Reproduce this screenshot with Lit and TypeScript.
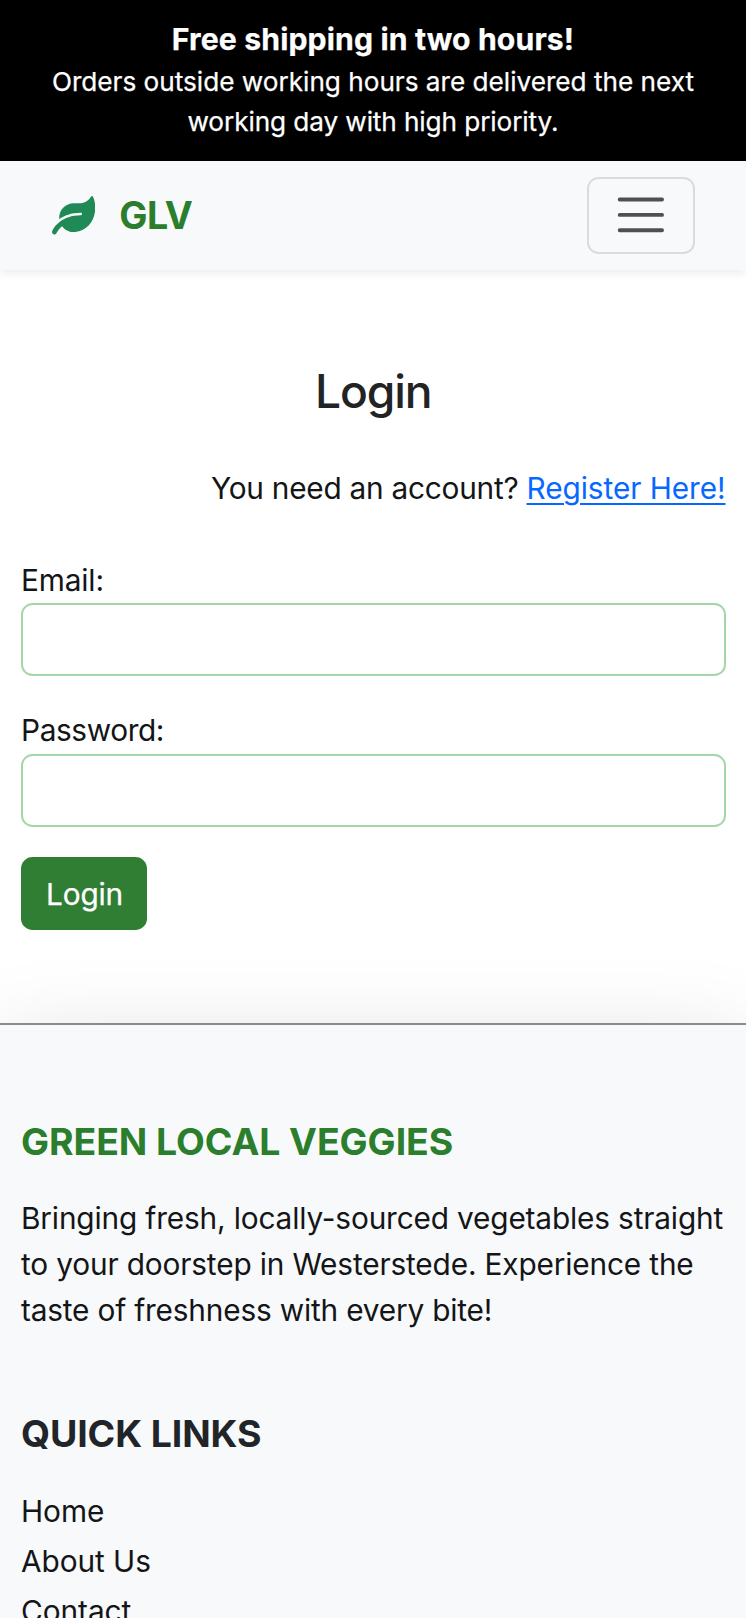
import { LitElement, html, css } from "lit";

class AppRoot extends LitElement {
  static styles = css`
    :host {
      display: block;
      height: 1618px;
      overflow: hidden;
      background: #fff;
      color: #141517;
      font-family: Inter, "Liberation Sans", sans-serif;
      font-size: 29.8px;
      line-height: 46.2px;
    }
    * { box-sizing: border-box; }
    h2, h3, p, ul { margin: 0; padding: 0; font-weight: 400; }
    a { color: inherit; text-decoration: none; }
    .line { display: block; white-space: nowrap; }

    .banner {
      height: 161px;
      padding-top: 17.4px;
      background: #000;
      color: #fff;
      text-align: center;
      font-size: 26.2px;
      line-height: 40.4px;
      -webkit-text-stroke: 0.25px #fff;
    }
    .banner-title {
      font-size: 30.2px;
      font-weight: 700;
      line-height: 44.6px;
      letter-spacing: 0.12px;
    }
    .banner-one { letter-spacing: -0.015px; }
    .banner-two { letter-spacing: -0.1px; }

    .navbar {
      display: flex;
      align-items: center;
      justify-content: space-between;
      height: 108.6px;
      padding: 0 51px 0 52px;
      background: #f8f9fb;
      box-shadow: 0 4px 8px rgba(0, 0, 0, 0.065);
    }
    .brand {
      display: flex;
      align-items: center;
      gap: 24px;
      color: #2a7e2c;
      font-size: 37.6px;
      font-weight: 700;
      letter-spacing: -0.5px;
    }
    .brand-name { padding-top: 2px; }
    .leaf { display: block; width: 43.3px; height: 38.5px; fill: #1f8a55; }
    .toggler {
      display: grid;
      place-items: center;
      width: 107.8px;
      height: 77px;
      padding: 0;
      border: 2px solid #d9dbdc;
      border-radius: 11.6px;
      background: transparent;
    }
    .bars { display: block; width: 57.75px; height: 57.75px; }

    .main { padding: 94px 20.5px 92.6px 21px; }
    .title {
      text-align: center;
      font-size: 46.2px;
      font-weight: 500;
      line-height: 55.4px;
      letter-spacing: -1.15px;
      color: #212324;
    }
    .register { margin-top: 46px; text-align: right; letter-spacing: -0.25px; }
    .register a {
      color: #0768ff;
      letter-spacing: -0.07px;
      text-decoration: underline;
      text-decoration-thickness: 2px;
      text-underline-offset: 4px;
    }
    .field { display: block; margin-top: 31px; }
    .field.first { margin-top: 45.6px; }
    .field.first .line { letter-spacing: -0.15px; }
    .field.second .line { letter-spacing: -0.38px; }
    .input {
      display: block;
      width: 100%;
      height: 73.4px;
      border: 2px solid #a5d6a7;
      border-radius: 11.6px;
      background: #fff;
      padding: 0 23px;
      font: inherit;
      outline: none;
    }
    .submit {
      display: block;
      margin-top: 30px;
      width: 126px;
      height: 73.4px;
      padding: 1px 0 0 1px;
      border: 0;
      border-radius: 11.6px;
      background: #2f7e33;
      color: #fff;
      font: inherit;
      letter-spacing: -0.2px;
      -webkit-text-stroke: 0.25px #fff;
    }

    .footer {
      min-height: 620px;
      padding: 93.6px 21px 0;
      border-top: 2px solid #868c92;
      background: #f8f9fb;
      box-shadow: 0 31px 92px rgba(0, 0, 0, 0.175);
    }
    .heading {
      font-size: 37.4px;
      font-weight: 700;
      letter-spacing: -0.06px;
      color: #212529;
    }
    .heading.green { color: #2a7e2c; }
    .about { margin-top: 30px; }
    .about-one { letter-spacing: -0.158px; }
    .about-two { letter-spacing: -0.155px; }
    .about-three { letter-spacing: -0.18px; }
    .quick { margin-top: 77.2px; letter-spacing: -0.099px; }
    .links {
      display: grid;
      gap: 3.8px;
      margin-top: 31px;
      list-style: none;
      letter-spacing: -0.06px;
    }
  `;

  render() {
    return html`
      <div class="banner">
        <span class="line banner-title">Free shipping in two hours!</span>
        <span class="line banner-one">Orders outside working hours are delivered the next</span>
        <span class="line banner-two">working day with high priority.</span>
      </div>
      <nav class="navbar">
        <a class="brand">
          <svg class="leaf" viewBox="0 0 576 512">
            <path d="M546.2 9.7c-5.6-12.5-21.6-13-28.3-1.2C486.9 62.4 431.4 96 368 96h-80C182 96 96 182 96 288c0 7 .8 13.7 1.5 20.5C161.3 262.8 253.4 224 384 224c8.8 0 16 7.2 16 16s-7.2 16-16 16C132.6 256 26 410.1 2.4 468c-6.6 16.3 1.2 34.9 17.5 41.6 16.4 6.8 35-1.1 41.8-17.3 1.5-3.6 20.9-47.9 71.9-90.6 32.4 43.9 94 85.8 174.9 77.2C465.5 467.5 576 326.7 576 154.3c0-50.2-10.8-102.2-29.8-144.6z" />
          </svg>
          <span class="brand-name">GLV</span>
        </a>
        <button class="toggler" aria-label="Toggle navigation">
          <svg class="bars" viewBox="0 0 30 30">
            <path d="M4 7h22M4 15h22M4 23h22" fill="none" stroke="#4e5053" stroke-width="2" stroke-linecap="round" stroke-miterlimit="10" />
          </svg>
        </button>
      </nav>
      <main class="main">
        <h2 class="title">Login</h2>
        <p class="register line">You need an account? <a>Register Here!</a></p>
        <label class="field first">
          <span class="line">Email:</span>
          <input class="input" type="email" />
        </label>
        <label class="field second">
          <span class="line">Password:</span>
          <input class="input" type="password" />
        </label>
        <button class="submit">Login</button>
      </main>
      <footer class="footer">
        <h3 class="heading green">GREEN LOCAL VEGGIES</h3>
        <p class="about">
          <span class="line about-one">Bringing fresh, locally-sourced vegetables straight</span>
          <span class="line about-two">to your doorstep in Westerstede. Experience the</span>
          <span class="line about-three">taste of freshness with every bite!</span>
        </p>
        <h3 class="heading quick">QUICK LINKS</h3>
        <ul class="links">
          <li><a>Home</a></li>
          <li><a>About Us</a></li>
          <li><a>Contact</a></li>
        </ul>
      </footer>
    `;
  }
}
customElements.define("app-root", AppRoot);
